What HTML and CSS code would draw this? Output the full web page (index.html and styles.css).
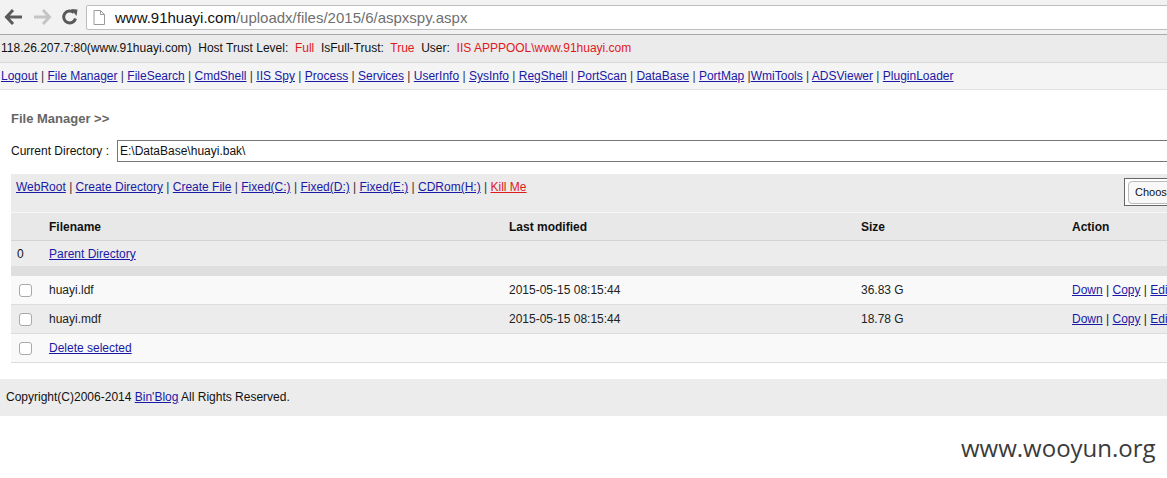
FILE: index.html
```html
<!DOCTYPE html>
<html>
<head>
<meta charset="utf-8">
<title>ASPXSpy</title>
<link rel="stylesheet" href="styles.css">
</head>
<body>
<div class="chrome">
  <svg class="nav-ic" width="20" height="20" viewBox="0 0 20 20"><path d="M9 3 L2.5 10 L9 17 M3 10 H18" fill="none" stroke="#5a5a5a" stroke-width="3" stroke-linejoin="miter"/></svg>
  <svg class="nav-ic" width="20" height="20" viewBox="0 0 20 20"><path d="M11 3 L17.5 10 L11 17 M17 10 H2" fill="none" stroke="#c4c4c4" stroke-width="3"/></svg>
  <svg class="nav-ic" width="20" height="20" viewBox="0 0 20 20"><path d="M15.5 11.5 A6 6 0 1 1 13.8 5.6" fill="none" stroke="#5a5a5a" stroke-width="3"/><path d="M11 2 L17.5 2.5 L16.5 9 Z" fill="#5a5a5a"/></svg>
  <div class="urlbox">
    <svg width="12" height="15" viewBox="0 0 12 15" class="page-ic"><path d="M1 0.5 H7.5 L11.5 4.5 V14.5 H1 Z M7.5 0.5 V4.5 H11.5" fill="#fff" stroke="#9a9a9a" stroke-width="1"/></svg>
    <span class="url"><span class="host">www.91huayi.com</span>/uploadx/files/2015/6/aspxspy.aspx</span>
  </div>
</div>

<div class="info">118.26.207.7:80(www.91huayi.com)&nbsp; Host Trust Level:&nbsp; <span class="red">Full</span>&nbsp; IsFull-Trust:&nbsp; <span class="red">True</span>&nbsp; User:&nbsp; <span class="red">IIS APPPOOL\www.91huayi.com</span></div>

<div class="menu"><a href="#">Logout</a> | <a href="#">File Manager</a> | <a href="#">FileSearch</a> | <a href="#">CmdShell</a> | <a href="#">IIS Spy</a> | <a href="#">Process</a> | <a href="#">Services</a> | <a href="#">UserInfo</a> | <a href="#">SysInfo</a> | <a href="#">RegShell</a> | <a href="#">PortScan</a> | <a href="#">DataBase</a> | <a href="#">PortMap</a> |<a href="#">WmiTools</a> | <a href="#">ADSViewer</a> | <a href="#">PluginLoader</a></div>

<div class="main">
  <div class="title">File Manager &gt;&gt;</div>
  <div class="curdir">
    <span class="curdir-label">Current Directory :</span>
    <div class="curdir-input">E:\DataBase\huayi.bak\</div>
  </div>
  <div class="toolbar">
    <div class="tools"><a href="#">WebRoot</a> | <a href="#">Create Directory</a> | <a href="#">Create File</a> | <a href="#">Fixed(C:)</a> | <a href="#">Fixed(D:)</a> | <a href="#">Fixed(E:)</a> | <a href="#">CDRom(H:)</a> | <a href="#" class="kill">Kill Me</a></div>
    <div class="upload"><span class="choose">Choose File</span></div>
  </div>
  <table class="files">
    <colgroup><col class="c0"><col class="c1"><col class="c2"><col class="c3"><col class="c4"></colgroup>
    <tr class="head"><th></th><th>Filename</th><th>Last modified</th><th>Size</th><th>Action</th></tr>
    <tr class="parent"><td>0</td><td><a href="#">Parent Directory</a></td><td></td><td></td><td></td></tr>
    <tr class="band"><td colspan="5"></td></tr>
    <tr class="row light"><td><span class="cb"></span></td><td>huayi.ldf</td><td>2015-05-15 08:15:44</td><td>36.83 G</td><td><a href="#">Down</a> | <a href="#">Copy</a> | <a href="#">Edit</a></td></tr>
    <tr class="row dark"><td><span class="cb"></span></td><td>huayi.mdf</td><td>2015-05-15 08:15:44</td><td>18.78 G</td><td><a href="#">Down</a> | <a href="#">Copy</a> | <a href="#">Edit</a></td></tr>
    <tr class="row light"><td><span class="cb"></span></td><td><a href="#">Delete selected</a></td><td></td><td></td><td></td></tr>
  </table>
</div>

<div class="footer">Copyright(C)2006-2014 <a href="#">Bin'Blog</a> All Rights Reserved.</div>

<div class="watermark">www.wooyun.org</div>
</body>
</html>
```

FILE: styles.css
```css
html, body {
  margin: 0;
  padding: 0;
  background: #fff;
}
body {
  width: 1167px;
  height: 478px;
  overflow: hidden;
  position: relative;
  font-family: "Liberation Sans", Arial, sans-serif;
  font-size: 12px;
  color: #111;
}
a {
  color: #1a1aa6;
  text-decoration: underline;
}

/* browser chrome */
.chrome {
  height: 34px;
  background: #f2f2f2;
  border-bottom: 1px solid #a8a8a8;
  display: flex;
  align-items: center;
  padding-left: 4px;
  box-sizing: content-box;
}
.nav-ic {
  margin-right: 8px;
  flex: none;
}
.nav-ic:nth-child(3) {
  margin-right: 6px;
}
.urlbox {
  flex: none;
  width: 1120px;
  height: 23px;
  background: #fff;
  border: 1px solid #bdbdbd;
  border-radius: 2px;
  display: flex;
  align-items: center;
}
.page-ic {
  margin-left: 6px;
  margin-right: 10px;
  flex: none;
}
.url {
  font-size: 15px;
  color: #707070;
  white-space: nowrap;
}
.host {
  color: #111;
}

/* info bar */
.info {
  height: 27px;
  line-height: 27px;
  background: #ebebeb;
  padding-left: 1px;
  border-bottom: 1px solid #d8d8d8;
  white-space: nowrap;
  color: #111;
}
.red {
  color: #e0191d;
}

/* menu */
.menu {
  height: 26px;
  line-height: 26px;
  background: #f4f4f4;
  padding-left: 1px;
  border-bottom: 1px solid #e2e2e2;
  white-space: nowrap;
  color: #333;
}

/* main */
.main {
  padding-left: 11px;
}
.title {
  margin-top: 21px;
  font-size: 13px;
  line-height: 16px;
  font-weight: bold;
  color: #666;
}
.curdir {
  margin-top: 13px;
  display: flex;
  align-items: center;
  white-space: nowrap;
}
.curdir-label {
  width: 106px;
  flex: none;
}
.curdir-input {
  flex: none;
  width: 1100px;
  height: 20px;
  line-height: 20px;
  border: 1px solid #777;
  padding-left: 2px;
  background: #fff;
}
.toolbar {
  margin-top: 12px;
  height: 38px;
  background: #ebebeb;
  display: flex;
  justify-content: space-between;
  white-space: nowrap;
  color: #333;
}
.tools {
  padding-left: 5px;
  padding-top: 6px;
  line-height: 14px;
}
.kill {
  color: #e0191d;
}
.upload {
  flex: none;
  width: 200px;
  margin-top: 4px;
  margin-right: -157px;
  height: 28px;
  border: 1px solid #666;
  background: #fff;
  padding: 2px 3px;
  box-sizing: border-box;
}
.choose {
  display: inline-block;
  height: 21px;
  line-height: 21px;
  padding: 0 6px;
  border: 1px solid #bbb;
  border-radius: 4px;
  background: #f8f8f8;
  font-size: 11px;
  color: #111;
}

/* table */
.files {
  border-collapse: collapse;
  table-layout: fixed;
  width: 1200px;
  border-top: 1px solid #f7f7f7;
}
.c0 { width: 38px; }
.c1 { width: 460px; }
.c2 { width: 352px; }
.c3 { width: 211px; }
.c4 { width: 139px; }
.files th, .files td {
  padding: 0;
  text-align: left;
  white-space: nowrap;
  overflow: hidden;
}
.files th:first-child, .files td:first-child {
  padding-left: 6px;
}
.head th {
  height: 27px;
  background: #e8e8e8;
  border-bottom: 1px solid #d3d3d3;
  font-weight: bold;
  color: #111;
}
.parent td {
  height: 25px;
  background: #ececec;
}
.band td {
  height: 10px;
  background: #dfdfdf;
}
.row td {
  height: 28px;
  border-bottom: 1px solid #dcdcdc;
  color: #222;
}
.light td {
  background: #f9f9f9;
}
.dark td {
  background: #ececec;
}
.cb {
  display: inline-block;
  width: 11px;
  height: 11px;
  margin-left: 2px;
  border: 1px solid #a9a9a9;
  border-radius: 3px;
  background: #fff;
  vertical-align: middle;
}

/* footer */
.footer {
  margin-top: 16px;
  height: 37px;
  line-height: 37px;
  background: #ececec;
  padding-left: 6px;
  color: #111;
}

/* watermark overlay */
.watermark {
  position: absolute;
  left: 961px;
  top: 433px;
  font-family: "Open Sans", "Noto Sans", sans-serif;
  font-size: 24px;
  line-height: 30px;
  color: #3b3b3b;
}
```
